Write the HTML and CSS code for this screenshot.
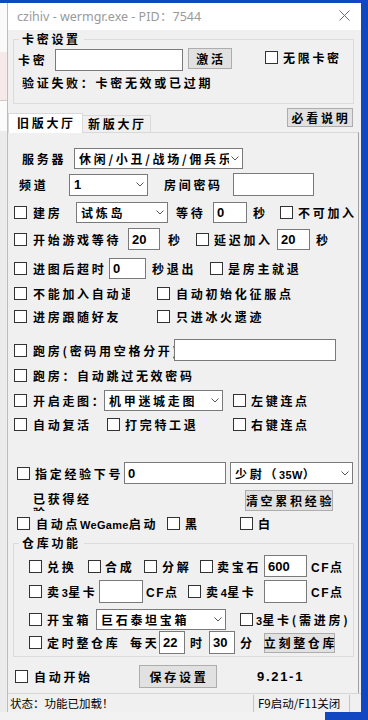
FILE: index.html
```html
<!DOCTYPE html>
<html lang="zh-CN">
<head>
  <meta charset="UTF-8">
  <title>czihiv - wermgr.exe</title>
  <meta name="viewport" content="width=device-width, initial-scale=1.0">
  <link rel="stylesheet" href="styles.css">
</head>
<body>
  <div class="top-band"></div>
  <div class="desk">
    <!-- fundo da área de trabalho à esquerda -->
    <div class="side-left">
      <div class="sl-white"></div>
      <div class="sl-pink"></div>
      <div class="sl-line"></div>
      <div class="sl-white2"></div>
      <div class="sl-grey"></div>
    </div>

    <div class="window">
      <div class="titlebar">
        <span class="title">czihiv - wermgr.exe - PID：7544</span>
        <svg class="close" width="11" height="11" viewBox="0 0 11 11">
          <path d="M0.5 0.5 L10.5 10.5 M10.5 0.5 L0.5 10.5" stroke="#6b6b6b" stroke-width="1" fill="none"/>
        </svg>
      </div>

      <div class="main">
        <!-- 卡密设置 -->
        <fieldset class="group group-key">
          <legend>卡密设置</legend>
          <div class="row r-key">
            <span>卡密</span>
            <div class="field h22"></div>
            <div class="btn btn-activate">激活</div>
            <label class="chk"><span class="box"></span><span>无限卡密</span></label>
          </div>
          <div class="key-msg">验证失败：卡密无效或已过期</div>
        </fieldset>

        <!-- abas -->
        <div class="tabbar">
          <div class="tab active">旧版大厅</div>
          <div class="tab">新版大厅</div>
          <div class="btn btn-help">必看说明</div>
        </div>

        <div class="panel">
          <div class="row r-server">
            <span>服务器</span>
            <div class="combo h21"><span class="val">休闲/小丑/战场/佣兵乐园</span><svg class="chev" width="8" height="5" viewBox="0 0 8 5"><path d="M0.5 0.5 L4 4 L7.5 0.5" fill="none" stroke="#555"/></svg></div>
          </div>

          <div class="row r-channel">
            <span>频道</span>
            <div class="combo h22"><span class="val num">1</span><svg class="chev" width="8" height="5" viewBox="0 0 8 5"><path d="M0.5 0.5 L4 4 L7.5 0.5" fill="none" stroke="#555"/></svg></div>
            <span class="ml16">房间密码</span>
            <div class="field h23"></div>
          </div>

          <div class="row r-build">
            <label class="chk g6"><span class="box"></span><span>建房</span></label>
            <div class="combo h21"><span class="val">试炼岛</span><svg class="chev" width="8" height="5" viewBox="0 0 8 5"><path d="M0.5 0.5 L4 4 L7.5 0.5" fill="none" stroke="#555"/></svg></div>
            <span class="ml8">等待</span>
            <div class="field h21"><span class="num">0</span></div>
            <span class="ml6">秒</span>
            <label class="chk"><span class="box"></span><span>不可加入</span></label>
          </div>

          <div class="row r-start">
            <label class="chk g6"><span class="box"></span><span>开始游戏等待</span></label>
            <div class="field h22"><span class="num">20</span></div>
            <span class="ml8">秒</span>
            <label class="chk"><span class="box"></span><span>延迟加入</span></label>
            <div class="field h21"><span class="num">20</span></div>
            <span class="ml6">秒</span>
          </div>

          <div class="row r-timeout">
            <label class="chk g6"><span class="box"></span><span>进图后超时</span></label>
            <div class="field h21"><span class="num">0</span></div>
            <span class="ml6">秒退出</span>
            <label class="chk"><span class="box"></span><span>是房主就退</span></label>
          </div>

          <div class="row r-pair r-autoquit">
            <label class="chk g6 cut"><span class="box"></span><span>不能加入自动退出</span></label>
            <label class="chk g6"><span class="box"></span><span>自动初始化征服点</span></label>
          </div>

          <div class="row r-pair r-follow">
            <label class="chk g6"><span class="box"></span><span>进房跟随好友</span></label>
            <label class="chk g6"><span class="box"></span><span>只进冰火遗迹</span></label>
          </div>

          <div class="row r-pass">
            <label class="chk g6"><span class="box"></span><span>跑房(密码用空格分开)</span></label>
            <div class="field h22"></div>
          </div>

          <div class="row r-single">
            <label class="chk g6"><span class="box"></span><span>跑房：自动跳过无效密码</span></label>
          </div>

          <div class="row r-walk">
            <label class="chk g6"><span class="box"></span><span>开启走图：</span></label>
            <div class="combo h21"><span class="val">机甲迷城走图</span><svg class="chev" width="8" height="5" viewBox="0 0 8 5"><path d="M0.5 0.5 L4 4 L7.5 0.5" fill="none" stroke="#555"/></svg></div>
            <label class="chk ml10"><span class="box"></span><span>左键连点</span></label>
          </div>

          <div class="row r-revive">
            <label class="chk g6"><span class="box"></span><span>自动复活</span></label>
            <label class="chk"><span class="box"></span><span>打完特工退</span></label>
            <label class="chk"><span class="box"></span><span>右键连点</span></label>
          </div>

          <div class="row r-exp">
            <label class="chk"><span class="box"></span><span>指定经验下号</span></label>
            <div class="field h22"><span class="num">0</span></div>
            <div class="combo h22 ml4"><span class="val">少尉（<span class="lat">35W</span>）</span><svg class="chev" width="8" height="5" viewBox="0 0 8 5"><path d="M0.5 0.5 L4 4 L7.5 0.5" fill="none" stroke="#555"/></svg></div>
          </div>

          <div class="row r-gained">
            <span class="wrap2">已获得经验</span>
            <div class="btn btn-clear">清空累积经验</div>
          </div>

          <div class="row r-wegame">
            <label class="chk g6"><span class="box"></span><span>自动点<span class="lat">WeGame</span>启动</span></label>
            <label class="chk"><span class="box"></span><span>黑</span></label>
            <label class="chk"><span class="box"></span><span>白</span></label>
          </div>

          <!-- 仓库功能 -->
          <fieldset class="group group-store">
            <legend>仓库功能</legend>
            <div class="row r-trade">
              <label class="chk"><span class="box"></span><span>兑换</span></label>
              <label class="chk g4"><span class="box"></span><span>合成</span></label>
              <label class="chk"><span class="box"></span><span>分解</span></label>
              <label class="chk g4"><span class="box"></span><span>卖宝石</span></label>
              <div class="field h22"><span class="num">600</span></div>
              <span class="ml4"><span class="lat cf">CF</span>点</span>
            </div>
            <div class="row r-cards">
              <label class="chk"><span class="box"></span><span>卖<span class="lat">3</span>星卡</span></label>
              <div class="field h23"></div>
              <span class="ml3"><span class="lat cf">CF</span>点</span>
              <label class="chk"><span class="box"></span><span>卖<span class="lat">4</span>星卡</span></label>
              <div class="field h23"></div>
              <span class="ml4"><span class="lat cf">CF</span>点</span>
            </div>
            <div class="row r-box">
              <label class="chk"><span class="box"></span><span>开宝箱</span></label>
              <div class="combo h21"><span class="val">巨石泰坦宝箱</span><svg class="chev" width="8" height="5" viewBox="0 0 8 5"><path d="M0.5 0.5 L4 4 L7.5 0.5" fill="none" stroke="#555"/></svg></div>
              <label class="chk g3 ml14"><span class="box"></span><span><span class="lat">3</span>星卡(需进房)</span></label>
            </div>
            <div class="row r-sched">
              <label class="chk"><span class="box"></span><span>定时整仓库</span></label>
              <span>每天</span>
              <div class="field h23"><span class="num">22</span></div>
              <span class="ml5">时</span>
              <div class="field h23"><span class="num">30</span></div>
              <span class="ml5">分</span>
              <div class="btn btn-sort">立刻整仓库</div>
            </div>
          </fieldset>

          <div class="row r-bottom">
            <label class="chk g6"><span class="box"></span><span>自动开始</span></label>
            <div class="btn btn-save">保存设置</div>
            <span class="ver ml40">9.21-1</span>
          </div>
        </div>
      </div>

      <div class="statusbar">
        <span class="st-main">状态：功能已加载！</span>
        <span class="st-sep"></span>
        <span class="st-keys">F9启动/F11关闭</span>
        <span class="st-sep"></span>
      </div>
    </div>

    <div class="side-right"></div>
  </div>
  <div class="bottom-band">
    <div class="bb-left"></div>
    <div class="bb-right"></div>
  </div>
</body>
</html>
```

FILE: styles.css
```css
/* janela estilo WinForms */
* {
  box-sizing: border-box;
}
body {
  margin: 0;
  width: 368px;
  height: 720px;
  overflow: hidden;
  background: #eeeeee;
  font-family: "Noto Sans CJK SC", sans-serif;
  font-size: 12px;
  font-weight: bold;
  letter-spacing: 2.7px;
  color: #000;
}
.top-band {
  height: 3px;
  background: #1247c2;
}
.desk {
  display: flex;
  height: 709px;
}
.side-left {
  width: 7px;
  display: flex;
  flex-direction: column;
}
.sl-white { height: 49px; background: #fafafa; }
.sl-pink { height: 48px; background: #f6e9e9; }
.sl-line { height: 1px; background: #cdcdcd; }
.sl-white2 { height: 30px; background: #fbfbfb; }
.sl-grey { flex: 1; background: #ececec; }
.side-right {
  width: 7px;
  background: #1247c2;
}
.bottom-band {
  display: flex;
  height: 8px;
}
.bb-left { width: 325px; background: #f2f2f2; }
.bb-right { flex: 1; background: #1247c2; }

.window {
  width: 354px;
  border-left: 1px solid #bdbdbd;
  background: #f0f0f0;
  display: flex;
  flex-direction: column;
}
.titlebar {
  height: 27px;
  background: #fff;
  display: flex;
  align-items: center;
  justify-content: space-between;
  padding: 0 11px 2px 9px;
}
.title {
  font-family: "Noto Sans", sans-serif;
  font-weight: normal;
  font-size: 12.5px;
  letter-spacing: 0;
  color: #9a9a9a;
}
.main {
  flex: 1;
  display: flex;
  flex-direction: column;
}

/* grupos */
.group {
  margin: 2px 0 0 5px;
  width: 341px;
  min-width: 0;
  border: 1px solid #dcdcdc;
  padding: 0;
}
.group legend {
  margin-left: 5px;
  padding: 0 3px;
  height: 14px;
  line-height: 14px;
}
.group-key {
  padding: 2px 0 13px 0;
}
.group-store {
  padding: 5px 0 2px 0;
}
.key-msg {
  margin: 5px 0 0 8px;
  height: 14px;
  line-height: 14px;
}

/* linhas */
.row {
  display: grid;
  align-items: center;
  height: 22px;
  white-space: nowrap;
}
.r-key { grid-template-columns: 37px 128px 82px auto; padding-left: 4px; height: 23px; align-items: start; }
.r-key > span { align-self: center; }
.r-key .field { margin-top: 1px; }
.r-key .chk { margin-top: 1px; }

.r-server { grid-template-columns: 52px 169px; padding-left: 14px; margin-top: 14px; }
.r-channel { grid-template-columns: 50px 79px 85px 81px; padding-left: 11px; margin-top: 4px; }
.r-build { grid-template-columns: 62px 92px 45px 34px 33px auto; padding-left: 6px; margin-top: 6px; }
.r-start { grid-template-columns: 114px 32px 36px 81px 33px auto; padding-left: 6px; margin-top: 5px; }
.r-timeout { grid-template-columns: 95px 37px 64px auto; padding-left: 6px; margin-top: 7px; }
.r-pair { grid-template-columns: 143px auto; padding-left: 6px; }
.r-autoquit { margin-top: 3px; }
.r-follow { margin-top: 1px; }
.r-pass { grid-template-columns: 160px 162px; padding-left: 6px; margin-top: 12px; }
.r-single { grid-template-columns: auto; padding-left: 6px; margin-top: 3px; }
.r-walk { grid-template-columns: 90px 119px auto; padding-left: 6px; margin-top: 3px; }
.r-revive { grid-template-columns: 93px 126px auto; padding-left: 6px; margin-top: 2px; }
.r-exp { grid-template-columns: 107px 102px 127px; padding-left: 9px; margin-top: 27px; }
.r-gained { grid-template-columns: 212px 88px; padding-left: 25px; margin-top: 5px; }
.r-wegame { grid-template-columns: 150px 73px auto; padding-left: 9px; margin-top: 1px; }
.r-trade { grid-template-columns: 59px 56px 56px 64px 43px auto; padding-left: 15px; }
.r-cards { grid-template-columns: 70px 44px 45px 76px 43px auto; padding-left: 15px; margin-top: 3px; }
.r-box { grid-template-columns: 67px 130px auto; padding-left: 15px; margin-top: 6px; }
.r-sched { grid-template-columns: 101px 29px 26px 24px 26px 29px 71px; padding-left: 15px; margin-top: 1px; height: 23px; }
.r-bottom { grid-template-columns: 124px 78px auto; padding-left: 7px; margin-top: 8px; height: 23px; }

.ml3 { margin-left: 3px; }
.ml4 { margin-left: 4px; }
.ml5 { margin-left: 5px; }
.ml6 { margin-left: 6px; }
.ml8 { margin-left: 8px; }
.ml10 { margin-left: 10px; }
.ml14 { margin-left: 14px; }
.ml16 { margin-left: 16px; }
.ml40 { margin-left: 40px; }

/* controles */
.chk {
  display: flex;
  align-items: center;
  gap: 5px;
  overflow: hidden;
}
.chk.g3 { gap: 3px; }
.chk.g4 { gap: 4px; }
.chk.g6 { gap: 6px; }
.chk.cut { width: 116px; }
.box {
  flex: none;
  width: 13px;
  height: 13px;
  border: 1px solid #333;
  background: #fff;
}
.field {
  display: flex;
  align-items: center;
  background: #fff;
  border: 1px solid #7a7a7a;
  padding-left: 3px;
}
.combo {
  display: flex;
  align-items: center;
  background: #fff;
  border: 1px solid #7a7a7a;
  padding: 0 3px 0 4px;
  overflow: hidden;
}
.combo .val {
  flex: 1;
  overflow: hidden;
}
.combo .chev {
  flex: none;
  margin-left: 2px;
}
.h21 { height: 21px; }
.h22 { height: 22px; }
.h23 { height: 23px; }
.num {
  font-family: "Liberation Sans", sans-serif;
  font-weight: bold;
  font-size: 13px;
  letter-spacing: 0;
}
/* letras latinas dentro dos rótulos */
.lat {
  font-family: "Liberation Sans", sans-serif;
  font-size: 11px;
  letter-spacing: 0.3px;
}
.lat.cf {
  font-size: 12px;
  letter-spacing: 1.5px;
}
.btn {
  display: flex;
  align-items: center;
  justify-content: center;
  background: #e1e1e1;
  border: 1px solid #adadad;
  padding-left: 2px;
}
.btn-activate { width: 44px; height: 21px; margin-left: 5px; }
.btn-help { width: 66px; height: 19px; }
.btn-clear { height: 21px; }
.btn-sort { height: 20px; }
.btn-save { height: 23px; }
.wrap2 {
  white-space: normal;
  width: 62px;
  height: 19px;
  line-height: 14px;
  overflow: hidden;
  align-self: start;
  margin-top: 3px;
}
.ver {
  font-family: "Liberation Sans", sans-serif;
  font-size: 13px;
  letter-spacing: 1.7px;
}

/* abas */
.tabbar {
  display: flex;
  align-items: flex-end;
  height: 24px;
  margin-top: 4px;
}
.tab {
  height: 17px;
  width: 68px;
  padding-left: 5px;
  line-height: 16px;
  border: 1px solid #d9d9d9;
  border-left: none;
  border-bottom: none;
}
.tab.active {
  position: relative;
  z-index: 1;
  width: 75px;
  height: 20px;
  margin-bottom: -1px;
  padding-left: 8px;
  line-height: 18px;
  background: #fff;
  border-left: 1px solid #d9d9d9;
}
.btn-help {
  align-self: flex-start;
  margin-left: auto;
  margin-right: 8px;
}
.panel {
  flex: 1;
  width: 351px;
  border-top: 1px solid #d9d9d9;
  border-right: 1px solid #a0a0a0;
}

/* barra de status */
.statusbar {
  display: flex;
  align-items: center;
  height: 19px;
  border-top: 1px solid #d6d6d6;
  font-weight: normal;
  font-size: 11.5px;
  letter-spacing: 0;
}
.st-main {
  width: 245px;
  padding-left: 2px;
}
.st-sep {
  width: 1px;
  height: 17px;
  background: #c4c4c4;
}
.st-keys {
  padding-left: 4px;
  width: 95px;
}
```
